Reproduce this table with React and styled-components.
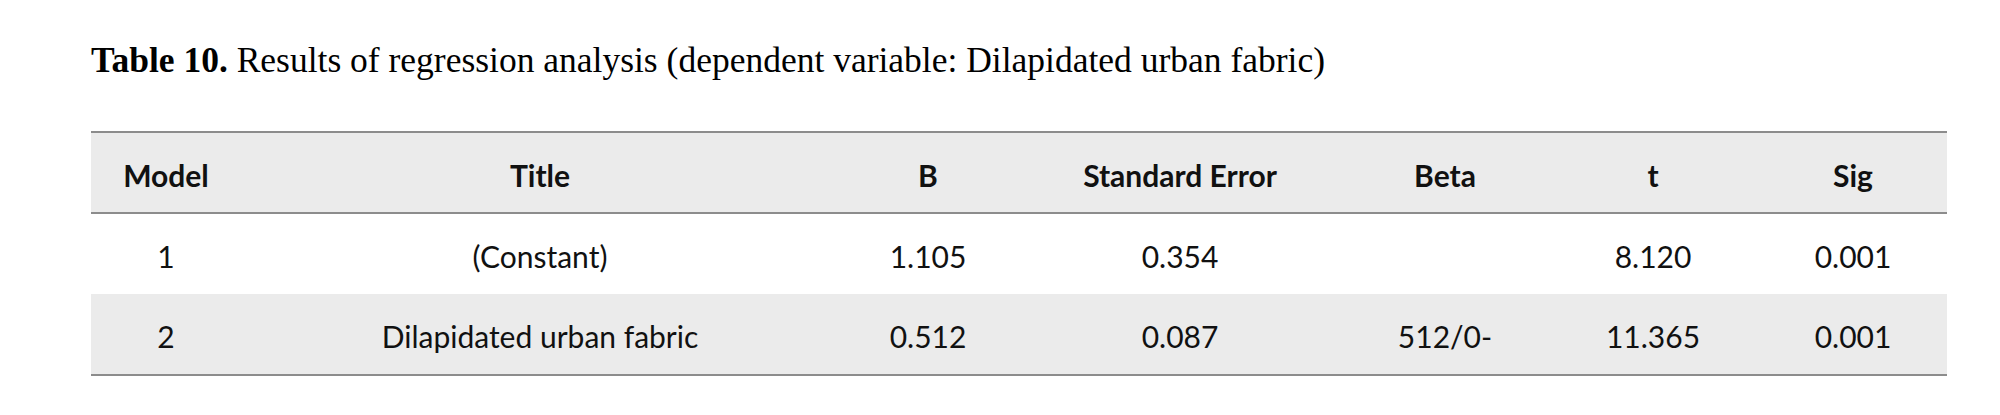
import React from "react";
import styled, { createGlobalStyle } from "styled-components";

const columns = [150, 598, 178, 326, 204, 212, 188];

const headers = ["Model", "Title", "B", "Standard Error", "Beta", "t", "Sig"];

const rows = [
  { id: 1, cells: ["1", "(Constant)", "1.105", "0.354", "", "8.120", "0.001"] },
  {
    id: 2,
    cells: ["2", "Dilapidated urban fabric", "0.512", "0.087", "512/0-", "11.365", "0.001"],
  },
];

const GlobalStyle = createGlobalStyle`
  body {
    margin: 0;
    background: #fff;
  }
`;

const StyledPage = styled.div`
  width: 2000px;
  height: 415px;
  padding: 40px 0 0 91px;
  box-sizing: border-box;
  background: #fff;
`;

const StyledCaption = styled.p`
  margin: 0 0 50px;
  font-family: "Liberation Serif", "Times New Roman", serif;
  font-size: 35.5px;
  line-height: 41px;
  color: #000;
  white-space: nowrap;
  b {
    font-weight: 700;
  }
`;

const StyledTable = styled.div`
  width: ${columns.reduce((a, b) => a + b, 0)}px;
  border-top: 2px solid #8c8c8c;
  border-bottom: 2px solid #8c8c8c;
  font-family: Lato, "Open Sans", sans-serif;
  color: #111;
`;

const StyledRow = styled.div`
  display: grid;
  grid-template-columns: ${columns.map((c) => c + "px").join(" ")};
  height: ${(p) => (p.$header ? 79 : 80)}px;
  background: ${(p) => (p.$shaded ? "#ebebeb" : "#fff")};
  border-bottom: ${(p) => (p.$header ? "2px solid #8c8c8c" : "none")};
`;

const StyledCell = styled.div`
  display: flex;
  align-items: center;
  justify-content: center;
  padding-top: 4px;
  box-sizing: border-box;
  font-size: 30px;
  font-weight: ${(p) => (p.$header ? 700 : 400)};
  white-space: nowrap;
`;

function App() {
  return (
    <StyledPage>
      <GlobalStyle />
      <StyledCaption>
        <b>Table 10.</b> Results of regression analysis (dependent variable:
        Dilapidated urban fabric)
      </StyledCaption>
      <StyledTable>
        <StyledRow $header $shaded>
          {headers.map((h) => (
            <StyledCell $header key={h}>
              {h}
            </StyledCell>
          ))}
        </StyledRow>
        {rows.map((row, i) => (
          <StyledRow key={row.id} $shaded={i % 2 === 1}>
            {row.cells.map((c, j) => (
              <StyledCell key={j}>{c}</StyledCell>
            ))}
          </StyledRow>
        ))}
      </StyledTable>
    </StyledPage>
  );
}

export default App;
